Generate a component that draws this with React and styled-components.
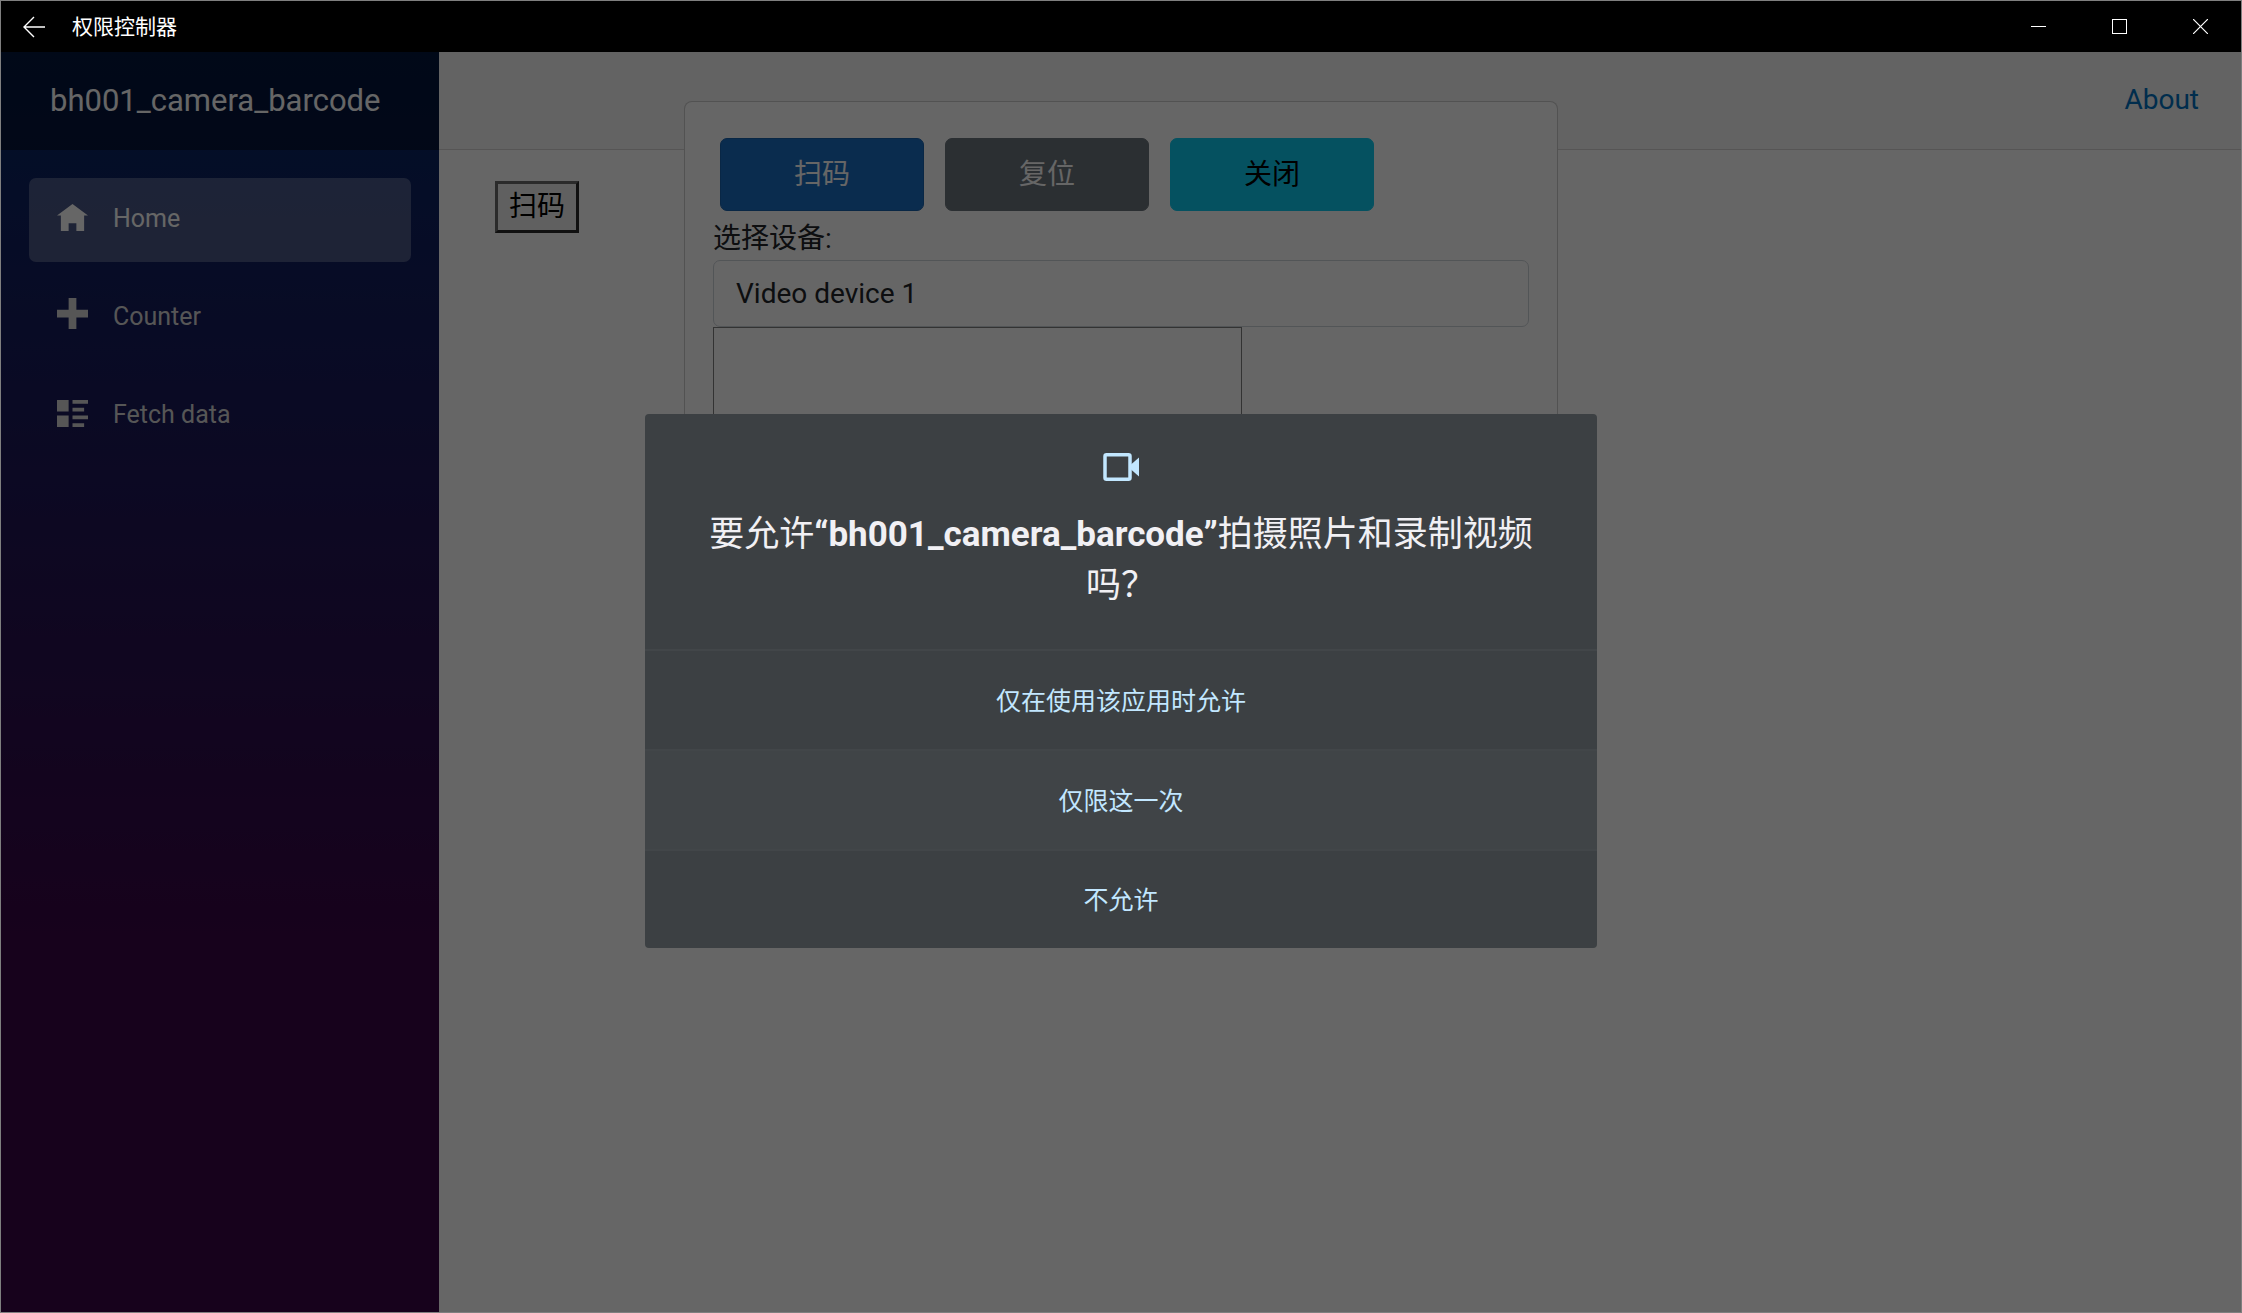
import styled, { createGlobalStyle, css } from 'styled-components'

const GlobalStyle = createGlobalStyle`
	* {
		box-sizing: border-box;
	}
	body {
		margin: 0;
		font-family: Roboto, "Noto Sans CJK SC", sans-serif;
		font-size: 28px;
		line-height: 42px;
		color: #212529;
	}
	button, select {
		font: inherit;
		margin: 0;
	}
`

const Window = styled.div`
	display: flex;
	flex-direction: column;
	height: 100vh;
	border: 1px solid #7f7f7f;
	background: #fff;
	overflow: hidden;
`

/* ---- title bar ---- */

const TitleBar = styled.header`
	display: flex;
	flex: none;
	height: 51px;
	background: #000;
	color: #fff;
`

const TitleButton = styled.button`
	display: flex;
	align-items: center;
	justify-content: center;
	width: ${(props) => (props.$narrow ? '65px' : '81px')};
	padding: 0;
	border: 0;
	background: transparent;
	color: inherit;
`

const WindowTitle = styled.h1`
	flex: 1;
	margin: 0;
	padding-left: 6px;
	font-family: "Noto Sans CJK SC", sans-serif;
	font-size: 21px;
	font-weight: 400;
	line-height: 48px;
`

const LineIcon = styled.svg`
	display: block;
	fill: none;
	stroke: currentColor;
`

/* ---- page ---- */

const Workspace = styled.div`
	position: relative;
	display: flex;
	flex: 1;
	min-height: 0;
`

const Sidebar = styled.aside`
	flex: none;
	width: 438px;
	background-image: linear-gradient(180deg, rgb(5, 39, 103) 0%, #3a0647 70%);
`

const Brand = styled.div`
	display: flex;
	align-items: center;
	height: 98px;
	padding: 0 49px;
	background: rgba(0, 0, 0, 0.4);
`

const BrandLink = styled.a`
	color: #fff;
	font-size: 31px;
	text-decoration: none;
`

const Nav = styled.nav`
	display: flex;
	flex-direction: column;
	gap: 14px;
	padding: 28px;
`

const NavItem = styled.a`
	display: flex;
	align-items: center;
	gap: 25px;
	height: 84px;
	padding: 0 28px 2px;
	border-radius: 7px;
	color: #d7d7d7;
	font-size: 25px;
	text-decoration: none;

	${(props) => props.$active && css`
		color: #fff;
		background: rgba(255, 255, 255, 0.25);
	`}
`

const NavIcon = styled.svg`
	flex: none;
	width: 31px;
	height: 31px;
	margin-bottom: 8px;
	fill: currentColor;
`

const Main = styled.main`
	flex: 1;
	min-width: 0;
`

const TopRow = styled.div`
	display: flex;
	align-items: center;
	justify-content: flex-end;
	height: 98px;
	padding: 0 42px 2px;
	background: #f7f7f7;
	border-bottom: 1px solid #d6d5d5;
`

const TopLink = styled.a`
	color: #0071c1;
	text-decoration: none;
`

const Content = styled.div`
	padding: 31px 56px;
`

const PlainButton = styled.button`
	display: block;
	padding: 2px 11px;
	border: 3px solid;
	border-color: #6b6b6b #2b2b2b #2b2b2b #6b6b6b;
	background: #efefef;
	color: #000;
`

/* ---- scanner modal ---- */

const ModalLayer = styled.div`
	position: absolute;
	inset: 0;
	display: flex;
	align-items: flex-start;
	justify-content: center;
	padding-top: 49px;
`

const ScanCard = styled.section`
	width: 874px;
	padding: 29px 28px;
	background: #fff;
	border: 1px solid rgba(0, 0, 0, 0.2);
	border-radius: 8px;
`

const ButtonRow = styled.div`
	display: flex;
	gap: 21px;
	padding: 7px;
`

const buttonColors = {
	primary: css`
		background: #1b6ec2;
		border-color: #1861ac;
		color: #fff;
	`,
	secondary: css`
		background: #6c757d;
		border-color: #6c757d;
		color: #fff;
	`,
	info: css`
		background: #0dcaf0;
		border-color: #0dcaf0;
		color: #000;
	`,
}

const Button = styled.button`
	width: 204px;
	height: 73px;
	padding: 0;
	border: 1px solid;
	border-radius: 7px;
	${(props) => buttonColors[props.$variant]}
`

const Label = styled.label`
	display: block;
`

const Select = styled.select`
	display: block;
	appearance: none;
	width: 100%;
	height: 67px;
	padding: 0 22px;
	border: 1px solid #ced4da;
	border-radius: 7px;
	background: #fff;
	color: #212529;
`

const Preview = styled.video`
	display: block;
	width: 529px;
	height: 396px;
	border: 1px solid gray;
`

/* ---- permission dialog ---- */

const Scrim = styled.div`
	position: absolute;
	inset: 0;
	display: flex;
	align-items: center;
	justify-content: center;
	padding-bottom: 2px;
	background: rgba(0, 0, 0, 0.6);
`

const Dialog = styled.div`
	width: 952px;
	border-radius: 4px;
	background: #3c4043;
	overflow: hidden;
`

const DialogHeader = styled.div`
	display: flex;
	flex-direction: column;
	align-items: center;
	gap: 28px;
	padding: 39px 56px 38px;
`

const DialogTitle = styled.h2`
	margin: 0;
	color: #f1f0f4;
	font-size: 35px;
	font-weight: 400;
	line-height: 51px;
	text-align: center;
`

const DialogOption = styled.button`
	display: block;
	width: 100%;
	height: 100px;
	padding: 3px 0 0;
	border: 0;
	border-top: 2px solid #424649;
	background: ${(props) => (props.$raised ? '#404447' : 'transparent')};
	color: #c2e7ff;
	font-size: 25px;

	&:last-child {
		height: 99px;
	}
`

const navItems = [
	{
		title: 'Home',
		icon: 'M4 1l-4 3h1v4h2v-2h2v2h2v-4.03l1 .03-4-3z',
	},
	{
		title: 'Counter',
		icon: 'M3 0v3h-3v2h3v3h2v-3h3v-2h-3v-3h-2z',
	},
	{
		title: 'Fetch data',
		icon: 'M0 1v3h3v-3h-3zm4 0v1h4v-1h-4zm0 2v1h3v-1h-3zm-4 2v3h3v-3h-3zm4 0v1h4v-1h-4zm0 2v1h3v-1h-3z',
	},
]

const WindowBar = () => (
	<TitleBar>
		<TitleButton $narrow aria-label="返回">
			<LineIcon width="22" height="22" viewBox="0 0 22 22" strokeWidth="1.4">
				<path d="M11 1L1 11l10 10M1 11h21" />
			</LineIcon>
		</TitleButton>
		<WindowTitle>权限控制器</WindowTitle>
		<TitleButton aria-label="最小化">
			<LineIcon width="15" height="15" viewBox="0 0 15 15">
				<path d="M0 7.5h15" />
			</LineIcon>
		</TitleButton>
		<TitleButton aria-label="最大化">
			<LineIcon width="15" height="15" viewBox="0 0 15 15">
				<rect x="0.5" y="0.5" width="14" height="14" />
			</LineIcon>
		</TitleButton>
		<TitleButton aria-label="关闭窗口">
			<LineIcon width="15" height="15" viewBox="0 0 15 15" strokeWidth="1.2">
				<path d="M0 0l15 15M15 0L0 15" />
			</LineIcon>
		</TitleButton>
	</TitleBar>
)

const NavMenu = () => (
	<Sidebar>
		<Brand>
			<BrandLink href="#">bh001_camera_barcode</BrandLink>
		</Brand>
		<Nav>
			{navItems.map((item, index) => (
				<NavItem key={item.title} href="#" $active={index === 0}>
					<NavIcon viewBox="0 0 8 8" aria-hidden="true">
						<path d={item.icon} />
					</NavIcon>
					{item.title}
				</NavItem>
			))}
		</Nav>
	</Sidebar>
)

const Scanner = () => (
	<ModalLayer>
		<ScanCard>
			<ButtonRow>
				<Button $variant="primary">扫码</Button>
				<Button $variant="secondary">复位</Button>
				<Button $variant="info">关闭</Button>
			</ButtonRow>
			<Label htmlFor="device">选择设备:</Label>
			<Select id="device">
				<option>Video device 1</option>
			</Select>
			<Preview />
		</ScanCard>
	</ModalLayer>
)

const PermissionDialog = () => (
	<Scrim>
		<Dialog role="dialog" aria-modal="true" aria-labelledby="permission-title">
			<DialogHeader>
				<svg width="36" height="28" viewBox="0 0 36 28" aria-hidden="true">
					<rect x="2" y="1.75" width="25" height="24.5" rx="1.5" fill="none" stroke="#c2e7ff" strokeWidth="3.5" />
					<path d="M28 11.5l8-7v19l-8-7z" fill="#c2e7ff" />
				</svg>
				<DialogTitle id="permission-title">
					要允许<b>“bh001_camera_barcode”</b>拍摄照片和录制视频吗？
				</DialogTitle>
			</DialogHeader>
			<DialogOption>仅在使用该应用时允许</DialogOption>
			<DialogOption $raised>仅限这一次</DialogOption>
			<DialogOption>不允许</DialogOption>
		</Dialog>
	</Scrim>
)

export default function App() {
	return (
		<Window>
			<GlobalStyle />
			<WindowBar />
			<Workspace>
				<NavMenu />
				<Main>
					<TopRow>
						<TopLink href="#">About</TopLink>
					</TopRow>
					<Content>
						<PlainButton>扫码</PlainButton>
					</Content>
				</Main>
				<Scanner />
				<PermissionDialog />
			</Workspace>
		</Window>
	)
}
